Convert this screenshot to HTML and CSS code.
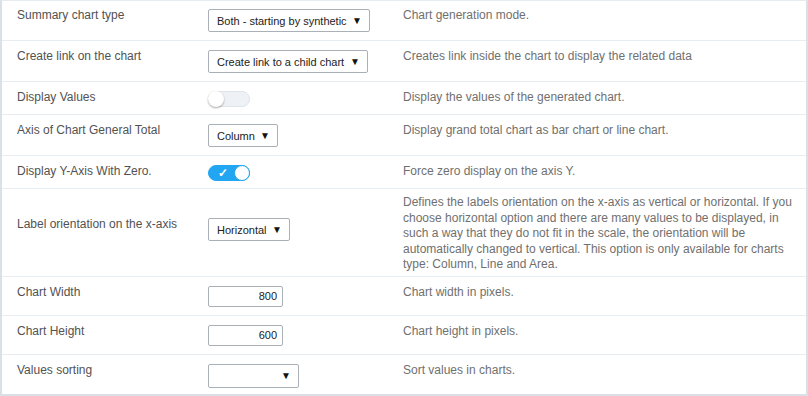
FILE: index.html
```html
<!DOCTYPE html>
<html lang="en">
<head>
  <title>Chart settings</title>
  <meta charset="utf-8">
  <link rel="stylesheet" href="styles.css">
</head>
<body>
  <div class="settings">
    <div class="settings__row">
      <span class="settings__label">Summary chart type</span>
      <div class="settings__control">
        <div class="select select--type"><span class="select__value">Both - starting by synthetic</span><span class="select__arrow">▼</span></div>
      </div>
      <p class="settings__desc">Chart generation mode.</p>
    </div>
    <div class="settings__row">
      <span class="settings__label">Create link on the chart</span>
      <div class="settings__control">
        <div class="select select--link"><span class="select__value">Create link to a child chart</span><span class="select__arrow">▼</span></div>
      </div>
      <p class="settings__desc">Creates link inside the chart to display the related data</p>
    </div>
    <div class="settings__row settings__row--switch">
      <span class="settings__label">Display Values</span>
      <div class="settings__control">
        <button class="toggle" aria-pressed="false"><span class="toggle__knob"></span></button>
      </div>
      <p class="settings__desc">Display the values of the generated chart.</p>
    </div>
    <div class="settings__row">
      <span class="settings__label">Axis of Chart General Total</span>
      <div class="settings__control">
        <div class="select select--axis"><span class="select__value">Column</span><span class="select__arrow">▼</span></div>
      </div>
      <p class="settings__desc">Display grand total chart as bar chart or line chart.</p>
    </div>
    <div class="settings__row settings__row--switch">
      <span class="settings__label">Display Y-Axis With Zero.</span>
      <div class="settings__control">
        <button class="toggle" aria-pressed="true"><span class="toggle__check">✓</span><span class="toggle__knob"></span></button>
      </div>
      <p class="settings__desc">Force zero display on the axis Y.</p>
    </div>
    <div class="settings__row settings__row--tall">
      <span class="settings__label">Label orientation on the x-axis</span>
      <div class="settings__control">
        <div class="select select--orient"><span class="select__value">Horizontal</span><span class="select__arrow">▼</span></div>
      </div>
      <p class="settings__desc">Defines the labels orientation on the x-axis as vertical or horizontal. If you choose horizontal option and there are many values to be displayed, in such a way that they do not fit in the scale, the orientation will be automatically changed to vertical. This option is only available for charts type: Column, Line and Area.</p>
    </div>
    <div class="settings__row">
      <span class="settings__label">Chart Width</span>
      <div class="settings__control">
        <input class="field" type="text" value="800">
      </div>
      <p class="settings__desc">Chart width in pixels.</p>
    </div>
    <div class="settings__row">
      <span class="settings__label">Chart Height</span>
      <div class="settings__control">
        <input class="field" type="text" value="600">
      </div>
      <p class="settings__desc">Chart height in pixels.</p>
    </div>
    <div class="settings__row">
      <span class="settings__label">Values sorting</span>
      <div class="settings__control">
        <div class="select select--sort"><span class="select__value"></span><span class="select__arrow">▼</span></div>
      </div>
      <p class="settings__desc">Sort values in charts.</p>
    </div>
  </div>
</body>
</html>
```

FILE: styles.css
```css
*, *::before, *::after {
  margin: 0;
  padding: 0;
  box-sizing: border-box;
}

body {
  font-family: "Liberation Sans", Arial, sans-serif;
  font-size: 12px;
  background-color: #ffffff;
}

.settings {
  width: 808px;
  height: 396px;
  border: 2px solid #d9e0e8;
  border-top: 1px solid #e6ebf0;
}

.settings__row {
  display: grid;
  grid-template-columns: 191px 195px 1fr;
  align-items: start;
  padding: 7px 0 8px 15px;
  border-bottom: 1px solid #e8edf2;
}

.settings__row:first-child {
  padding-top: 6px;
}

.settings__row:last-child {
  border-bottom: none;
}

.settings__label {
  line-height: 16px;
  color: #525252;
}

.settings__desc {
  line-height: 16px;
  color: #707070;
  padding-right: 12px;
}

.settings__row--switch .settings__control {
  margin-bottom: -1px;
}

.settings__row--tall {
  padding-top: 6px;
  padding-bottom: 3px;
}

.settings__row--tall .settings__label {
  margin-top: 21px;
}

.settings__row--tall .settings__control {
  margin-top: 21px;
}

.settings__row--tall .settings__desc {
  line-height: 15.6px;
}

.select {
  display: flex;
  align-items: center;
  justify-content: space-between;
  height: 23px;
  margin-top: 2px;
  padding: 0 7px 0 8px;
  border: 1px solid #a9b0b8;
  border-radius: 2px;
  background-color: #ffffff;
  font-size: 11px;
  white-space: nowrap;
  color: #222222;
}

.select__arrow {
  font-size: 10px;
  color: #111111;
}

.select--type { width: 162px; }
.select--link { width: 160px; }
.select--axis { width: 70px; }
.select--orient { width: 82px; }
.select--sort { width: 91px; height: 24px; }

.toggle {
  position: relative;
  display: block;
  width: 42px;
  height: 16px;
  margin-top: 2px;
  border: 1px solid #dfe4ea;
  border-radius: 8px;
  background-color: #eef1f5;
}

.toggle__knob {
  position: absolute;
  top: -1px;
  left: -1px;
  width: 16px;
  height: 16px;
  border-radius: 50%;
  background-color: #ffffff;
  box-shadow: 0 1px 2px rgba(0, 0, 0, .35);
}

.toggle[aria-pressed='true'] {
  border-color: #22a6f2;
  background-color: #22a6f2;
}

.toggle[aria-pressed='true'] .toggle__knob {
  left: auto;
  right: -1px;
  border: 1px solid #22a6f2;
  box-shadow: none;
}

.toggle__check {
  position: absolute;
  top: 0;
  left: 9px;
  font-size: 12px;
  line-height: 14px;
  font-weight: bold;
  color: #ffffff;
}

.field {
  display: block;
  width: 75px;
  height: 21px;
  margin-top: 2px;
  padding: 0 5px;
  border: 1px solid #a9b0b8;
  border-radius: 2px;
  font: inherit;
  font-size: 11px;
  color: #222222;
  text-align: right;
}
```
